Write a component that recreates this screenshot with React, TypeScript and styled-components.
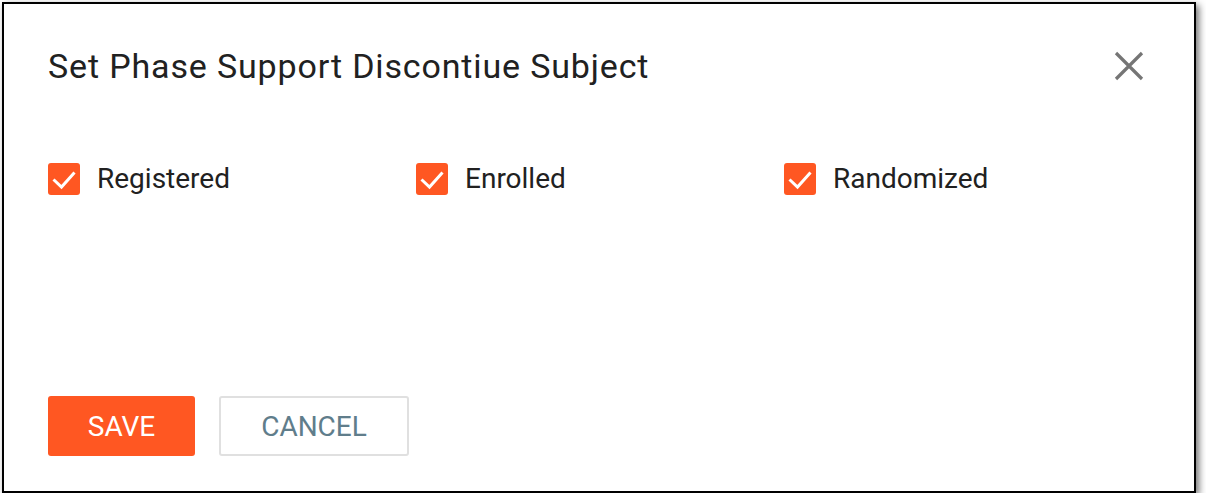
import React, {useState} from 'react';
import styled, {createGlobalStyle} from 'styled-components';

const GlobalStyle = createGlobalStyle`
  html, body {
    margin: 0;
    padding: 0;
    background: #ffffff;
  }
  body {
    font-family: Roboto, "Liberation Sans", Arial, sans-serif;
  }
`;

type OptionType = {
    id: string
    label: string
}

const options: OptionType[] = [
    {id: 'registered', label: 'Registered'},
    {id: 'enrolled', label: 'Enrolled'},
    {id: 'randomized', label: 'Randomized'},
];

export default function App() {
    const [checked, setChecked] = useState<Record<string, boolean>>({
        registered: true,
        enrolled: true,
        randomized: true,
    });

    const toggle = (id: string) => setChecked(prev => ({...prev, [id]: !prev[id]}));

    return (
        <>
            <GlobalStyle/>
            <Page>
                <Dialog>
                    <Header>
                        <Title>Set Phase Support Discontiue Subject</Title>
                        <CloseButton aria-label="close">
                            <svg width="30" height="30" viewBox="0 0 30 30">
                                <path d="M2 2 L28 28 M28 2 L2 28" stroke="#757575" strokeWidth="3.2" fill="none"/>
                            </svg>
                        </CloseButton>
                    </Header>

                    <Options>
                        {options.map(o => (
                            <Option key={o.id} onClick={() => toggle(o.id)}>
                                <Box checked={checked[o.id]}>
                                    {checked[o.id] && (
                                        <svg width="32" height="32" viewBox="0 0 32 32">
                                            <polyline points="5.5,16.5 13.5,24 26.5,9.5" stroke="#fff" strokeWidth="3"
                                                      fill="none"/>
                                        </svg>
                                    )}
                                </Box>
                                <Label>{o.label}</Label>
                            </Option>
                        ))}
                    </Options>

                    <Footer>
                        <Button variant="primary">SAVE</Button>
                        <Button variant="outline">CANCEL</Button>
                    </Footer>
                </Dialog>
            </Page>
        </>
    );
}

const Page = styled.div`
  padding: 2px 0 0 2px;
`;

const Dialog = styled.div`
  width: 1194px;
  height: 491px;
  box-sizing: border-box;
  border: 2px solid #000;
  background: #fff;
  box-shadow: 3px 3px 7px rgba(0, 0, 0, 0.55);
  display: flex;
  flex-direction: column;
  padding: 44px 50px 35px 44px;
`;

const Header = styled.div`
  display: flex;
  align-items: center;
  justify-content: space-between;
  height: 36px;
`;

const Title = styled.h2`
  margin: 0;
  font-size: 34px;
  letter-spacing: 0.85px;
  line-height: 36px;
  font-weight: 400;
  color: #212121;
`;

const CloseButton = styled.button`
  border: none;
  background: none;
  padding: 0;
  width: 30px;
  height: 30px;
  display: flex;
  cursor: pointer;
`;

const Options = styled.div`
  display: grid;
  grid-template-columns: repeat(3, 368px);
  margin-top: 78px;
`;

const Option = styled.label`
  display: flex;
  align-items: center;
  gap: 17px;
  cursor: pointer;
`;

const Box = styled.span<{ checked: boolean }>`
  width: 32px;
  height: 32px;
  border-radius: 3px;
  box-sizing: border-box;
  display: flex;
  background: ${props => props.checked ? '#ff5722' : '#fff'};
  border: ${props => props.checked ? 'none' : '2px solid #757575'};
`;

const Label = styled.span`
  font-size: 28px;
  color: #212121;
`;

const Footer = styled.div`
  margin-top: auto;
  display: flex;
  gap: 24px;
`;

const Button = styled.button<{ variant: 'primary' | 'outline' }>`
  height: 60px;
  box-sizing: border-box;
  border-radius: 3px;
  font-family: Roboto, "Liberation Sans", Arial, sans-serif;
  font-size: 28px;
  cursor: pointer;
  width: ${props => props.variant === 'primary' ? '147px' : '190px'};
  background: ${props => props.variant === 'primary' ? '#ff5722' : '#fff'};
  color: ${props => props.variant === 'primary' ? '#fff' : '#607d8b'};
  border: ${props => props.variant === 'primary' ? 'none' : '2px solid #e0e0e0'};
`;
